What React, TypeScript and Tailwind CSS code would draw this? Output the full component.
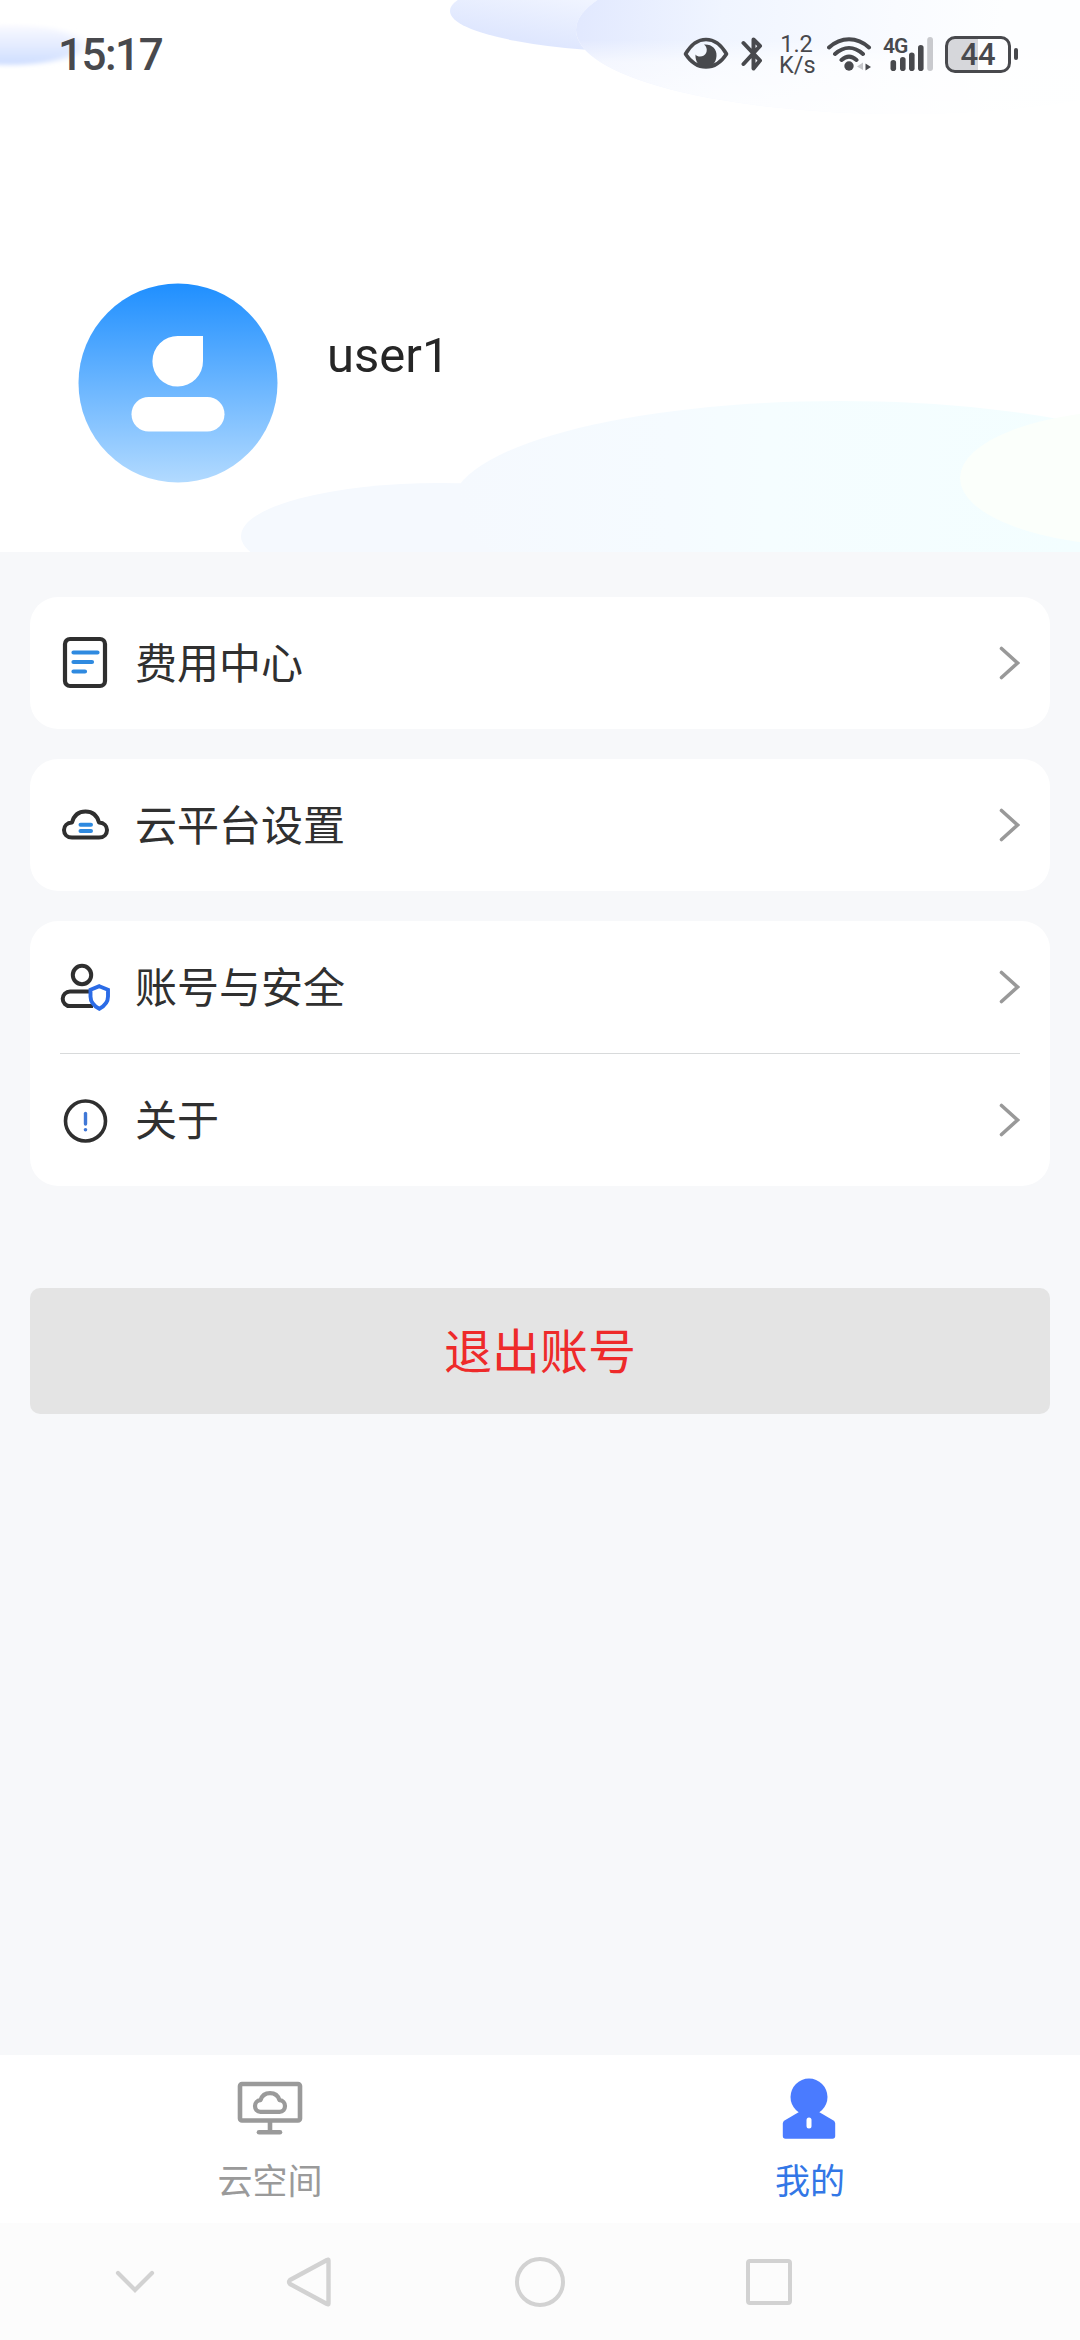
import type { ReactNode } from "react";

function HeaderBackdrop() {
  return (
    <svg className="absolute inset-0" width="1080" height="552" viewBox="0 0 1080 552" fill="none">
      <defs>
        <linearGradient id="glow" x1="0" y1="22" x2="0" y2="67" gradientUnits="userSpaceOnUse">
          <stop stopColor="#fdfcff" />
          <stop offset="1" stopColor="#ccdcff" />
        </linearGradient>
        <linearGradient id="topA" x1="600" y1="0" x2="590" y2="52" gradientUnits="userSpaceOnUse">
          <stop stopColor="#f1f5ff" />
          <stop offset="1" stopColor="#dfe7fe" />
        </linearGradient>
        <linearGradient id="topB" x1="570" y1="30" x2="1000" y2="60" gradientUnits="userSpaceOnUse">
          <stop stopColor="#e1e8fe" />
          <stop offset="0.35" stopColor="#f0f5ff" />
          <stop offset="0.75" stopColor="#f9fbff" />
          <stop offset="1" stopColor="#fdfeff" />
        </linearGradient>
        <linearGradient id="topBFade" x1="0" y1="40" x2="0" y2="114" gradientUnits="userSpaceOnUse">
          <stop stopColor="#fff" stopOpacity="0" />
          <stop offset="0.3" stopColor="#fff" stopOpacity="0.6" />
          <stop offset="1" stopColor="#fff" stopOpacity="0.8" />
        </linearGradient>
        <linearGradient id="hill" x1="455" y1="0" x2="1080" y2="0" gradientUnits="userSpaceOnUse">
          <stop stopColor="#f5f9fe" />
          <stop offset="0.35" stopColor="#f5fbff" />
          <stop offset="0.5" stopColor="#f5fdff" />
          <stop offset="1" stopColor="#f3feff" />
        </linearGradient>
        <filter id="soft" x="-50%" y="-50%" width="200%" height="200%">
          <feGaussianBlur stdDeviation="7 2" />
        </filter>
      </defs>
      <ellipse cx="10" cy="45" rx="72" ry="20" fill="url(#glow)" filter="url(#soft)" />
      <ellipse cx="670" cy="11" rx="220" ry="42" fill="url(#topA)" />
      <ellipse cx="900" cy="30" rx="324" ry="84" fill="#fff" />
      <ellipse cx="900" cy="30" rx="324" ry="84" fill="url(#topB)" />
      <ellipse cx="900" cy="30" rx="324" ry="84" fill="url(#topBFade)" />
      <ellipse cx="440" cy="536" rx="199" ry="53" fill="#f5f9fe" />
      <ellipse cx="840" cy="505" rx="388" ry="104" fill="url(#hill)" />
      <ellipse cx="1140" cy="478" rx="180" ry="68" fill="#fbfffb" />
    </svg>
  );
}

function StatusBar() {
  return (
    <div className="relative flex h-[108px] items-center justify-between pl-[58px] pr-[62px] text-[#48494d]">
      <span className="pt-[2px] text-[44px] font-medium leading-none tracking-[-1.5px]">15:17</span>
      <div className="flex items-center">
        <svg width="46" height="34" viewBox="0 0 46 34" fill="none">
          <path
            d="M2.500 17C8 7.500 15 2.500 23 2.500S38 7.500 43.500 17C38 25.500 31 30 23 30S8 25.500 2.500 17Z"
            stroke="currentColor"
            strokeWidth="3.600"
            strokeLinejoin="round"
          />
          <path
            d="M21 7.500C29 7 34 12 33.500 19C33 26 29 30 23 30C16 30 12 25 12.500 17.500C15 21 22 20 23.500 15C24.300 12 23.500 9.500 21 7.500Z"
            fill="currentColor"
          />
        </svg>
        <svg className="ml-3" width="22" height="36" viewBox="0 0 22 36" fill="none">
          <path
            d="M2.500 7L19 24.500L12.500 32.500V3.500L19 10L2.500 28"
            stroke="currentColor"
            strokeWidth="4"
            strokeLinecap="round"
            strokeLinejoin="round"
          />
        </svg>
        <p className="ml-4 w-[35px] whitespace-pre-line pt-px text-center text-[23.500px] leading-[21px]">
          {"1.2\nK/s"}
        </p>
        <svg className="ml-[13px]" width="45" height="34" viewBox="0 0 45 34" fill="none">
          <path
            d="M2 10.500C14 -.5 30 -.5 42 10.500M8 17C17 9 27 9 36 17M14.500 23C19.500 18.500 24.500 18.500 29.500 23"
            stroke="currentColor"
            strokeWidth="4"
            strokeLinecap="round"
          />
          <circle cx="22" cy="29" r="4.700" fill="currentColor" />
          <path d="M36 25.500V33L30 29.500Z" fill="#c4c5c9" />
          <path d="M38.500 26.500L44 30L38.500 33.500Z" fill="currentColor" />
        </svg>
        <div className="relative ml-[11px] h-[34px] w-[51px]">
          <span className="absolute left-0 top-[-1px] text-[21px] font-semibold leading-none tracking-[-1px]">4G</span>
          <svg width="51" height="34" viewBox="0 0 51 34" fill="currentColor">
            <rect x="7.500" y="23" width="5.600" height="11" rx="2.800" />
            <rect x="17" y="20" width="5.600" height="14" rx="2.800" />
            <rect x="26" y="15.500" width="5.600" height="18.500" rx="2.800" />
            <rect x="35" y="8" width="5.600" height="26" rx="2.800" />
            <rect x="44.200" y="0" width="5.800" height="34" rx="2.900" fill="#c9cace" />
          </svg>
        </div>
        <div className="ml-[11px] flex items-center gap-[3px]">
          <div className="flex h-[37px] w-[66px] items-center justify-center rounded-[10px] border-[3px] border-current bg-linear-to-r from-[#d6d7db] from-50% to-transparent to-50%">
            <span className="text-[31px] font-medium leading-none">44</span>
          </div>
          <div className="h-3 w-1 rounded-full bg-current" />
        </div>
      </div>
    </div>
  );
}

function Avatar() {
  return (
    <svg width="200" height="200" viewBox="0 0 200 200">
      <defs>
        <linearGradient id="avatar" x1="0" y1="0" x2="0" y2="1">
          <stop stopColor="#1f8fff" />
          <stop offset="1" stopColor="#b2daff" />
        </linearGradient>
      </defs>
      <circle cx="100" cy="100" r="99.500" fill="url(#avatar)" />
      <path d="M100 53H125V78A25.300 25.300 0 1 1 100 53Z" fill="#fff" />
      <rect x="53.500" y="114" width="93" height="34.500" rx="17.200" fill="#fff" />
    </svg>
  );
}

function BillIcon() {
  return (
    <svg width="50" height="54" viewBox="0 0 50 54" fill="none" strokeLinecap="round">
      <rect x="5" y="3" width="40" height="47" rx="5" stroke="#2f2f2f" strokeWidth="4.200" />
      <path d="M13.500 16.500H37.500M13.500 26H32M13.500 35.500H25" stroke="#2f8ae0" strokeWidth="4.200" />
    </svg>
  );
}

function CloudIcon() {
  return (
    <svg width="50" height="34" viewBox="0 0 50 34" fill="none" strokeLinecap="round">
      <path
        d="M12 29.500C7 29.500 4 26 4 22C4 18 7 14.800 12 14.500C14 7 19 3.500 25.500 3.500S37 7 39 14.500C44 14.800 47 18 47 22C47 26 44 29.500 39 29.500Z"
        stroke="#2f2f2f"
        strokeWidth="4"
        strokeLinejoin="round"
      />
      <path d="M20.500 16.700H31M20.500 23H31" stroke="#2f8ae0" strokeWidth="4" />
    </svg>
  );
}

function AccountIcon() {
  return (
    <svg width="50" height="50" viewBox="0 0 50 50" fill="none">
      <circle cx="22" cy="13" r="9.200" stroke="#2f2f2f" strokeWidth="4" />
      <path d="M33 29.500H10A7.300 7.300 0 0 0 10 44.100H33" stroke="#2f2f2f" strokeWidth="4" />
      <path
        d="M39.300 24.200L48 27.800V34.500C48 39.500 44.500 44 39.300 46.800C34 44 30.500 39.500 30.500 34.500V27.800Z"
        fill="#fff"
        stroke="#2b6be6"
        strokeWidth="3.900"
      />
    </svg>
  );
}

function AboutIcon() {
  return (
    <svg width="50" height="50" viewBox="0 0 50 50" fill="none">
      <circle cx="25.500" cy="26" r="20" stroke="#2f2f2f" strokeWidth="3.600" />
      <path d="M25.500 18.500V29" stroke="#3f77d6" strokeWidth="3.400" strokeLinecap="round" />
      <circle cx="25.500" cy="34.800" r="1.800" fill="#3f77d6" />
    </svg>
  );
}

function MenuRow({ icon, label }: { icon: ReactNode; label: string }) {
  return (
    <button className="flex h-[132px] w-full items-center">
      <span className="flex w-[50px] justify-center">{icon}</span>
      <span className="ml-[25px] pt-[3px] text-[42px] leading-none text-[#303030]">{label}</span>
      <svg className="ml-auto" width="21" height="34" viewBox="0 0 21 34" fill="none">
        <path d="M2.500 2.500L18.500 17L2.500 31.500" stroke="#999" strokeWidth="3.600" strokeLinecap="round" />
      </svg>
    </button>
  );
}

function Card({ children }: { children: ReactNode }) {
  return <div className="rounded-[28px] bg-white px-[30px]">{children}</div>;
}

function MonitorIcon() {
  return (
    <svg width="66" height="64" viewBox="0 0 66 64" fill="none" stroke="#9a9a9a" strokeLinecap="round" strokeLinejoin="round">
      <rect x="3" y="8" width="60" height="36.500" rx="2" strokeWidth="4.600" />
      <path d="M33 45V55" strokeWidth="4.600" strokeLinecap="butt" />
      <path d="M22 56.300H43" strokeWidth="4.600" />
      <path
        d="M23.500 35.800C20 35.800 18 33 18 30C18 27 20 24.500 23.500 24.200C25 19.500 28.500 17.200 33 17.200S41 19.500 42.500 24.200C46 24.500 48 27 48 30C48 33 46 35.800 42.500 35.800Z"
        strokeWidth="4.200"
      />
    </svg>
  );
}

function ProfileIcon() {
  return (
    <svg width="66" height="64" viewBox="0 0 66 64">
      <circle cx="32" cy="21" r="18.500" fill="#4a7bff" />
      <path
        d="M22 36L7.500 44.500Q5.800 45.500 5.800 47.500V60Q5.800 62.800 8.500 62.800H55.500Q58.200 62.800 58.200 60V47.500Q58.200 45.500 56.500 44.500L42 36Z"
        fill="#4a7bff"
      />
      <rect x="29.500" y="41.500" width="5" height="11" rx="2.500" fill="#fff" />
    </svg>
  );
}

function SystemNav() {
  return (
    <div className="flex h-[117px] items-center bg-[#fcfcfc] pl-[115px]">
      <svg width="40" height="24" viewBox="0 0 40 24" fill="none">
        <path d="M3 3L20 20L37 3" stroke="#d2d2d2" strokeWidth="4.200" strokeLinecap="round" />
      </svg>
      <svg className="ml-[131px]" width="46" height="52" viewBox="0 0 46 52" fill="none">
        <path
          d="M42.500 4.500V47.500Q42.500 49 41 48L4 28Q2 26 4 24L41 4Q42.500 3 42.500 4.500Z"
          stroke="#d2d2d2"
          strokeWidth="4.400"
          strokeLinejoin="round"
        />
      </svg>
      <div className="ml-[183px] size-[50px] rounded-full border-[4.500px] border-[#d2d2d2]" />
      <div className="ml-[181px] size-[46px] rounded-[4px] border-[4.500px] border-[#d2d2d2]" />
    </div>
  );
}

export default function App() {
  return (
    <div className="flex h-[2340px] w-[1080px] flex-col bg-[#f7f8fa] font-[Roboto,'Noto_Sans_CJK_SC',sans-serif]">
      <header className="relative h-[552px] overflow-hidden bg-white">
        <HeaderBackdrop />
        <StatusBar />
        <div className="relative mt-[175px] flex pl-[78px]">
          <Avatar />
          <h1 className="ml-[49px] mt-[45px] text-[49px] leading-[56px] text-[#262626]">user1</h1>
        </div>
      </header>

      <main className="flex flex-1 flex-col px-[30px] pt-[45px]">
        <div className="flex flex-col gap-[30px]">
          <Card>
            <MenuRow icon={<BillIcon />} label="费用中心" />
          </Card>
          <Card>
            <MenuRow icon={<CloudIcon />} label="云平台设置" />
          </Card>
          <Card>
            <MenuRow icon={<AccountIcon />} label="账号与安全" />
            <div className="h-px bg-[#d8dadb]" />
            <MenuRow icon={<AboutIcon />} label="关于" />
          </Card>
        </div>
        <button className="mt-[102px] h-[126px] rounded-[10px] bg-[#e4e4e4] pt-[3px] text-[48px] leading-none text-[#ee2a2a]">
          退出账号
        </button>
      </main>

      <nav className="grid h-[168px] grid-cols-2 bg-white text-[35px] leading-none">
        <button className="flex flex-col items-center pt-[21px] text-[#9a9a9a]">
          <MonitorIcon />
          <span className="mt-[25px]">云空间</span>
        </button>
        <button className="flex flex-col items-center pt-[21px] text-[#3377e6]">
          <ProfileIcon />
          <span className="mt-[25px]">我的</span>
        </button>
      </nav>
      <SystemNav />
    </div>
  );
}
